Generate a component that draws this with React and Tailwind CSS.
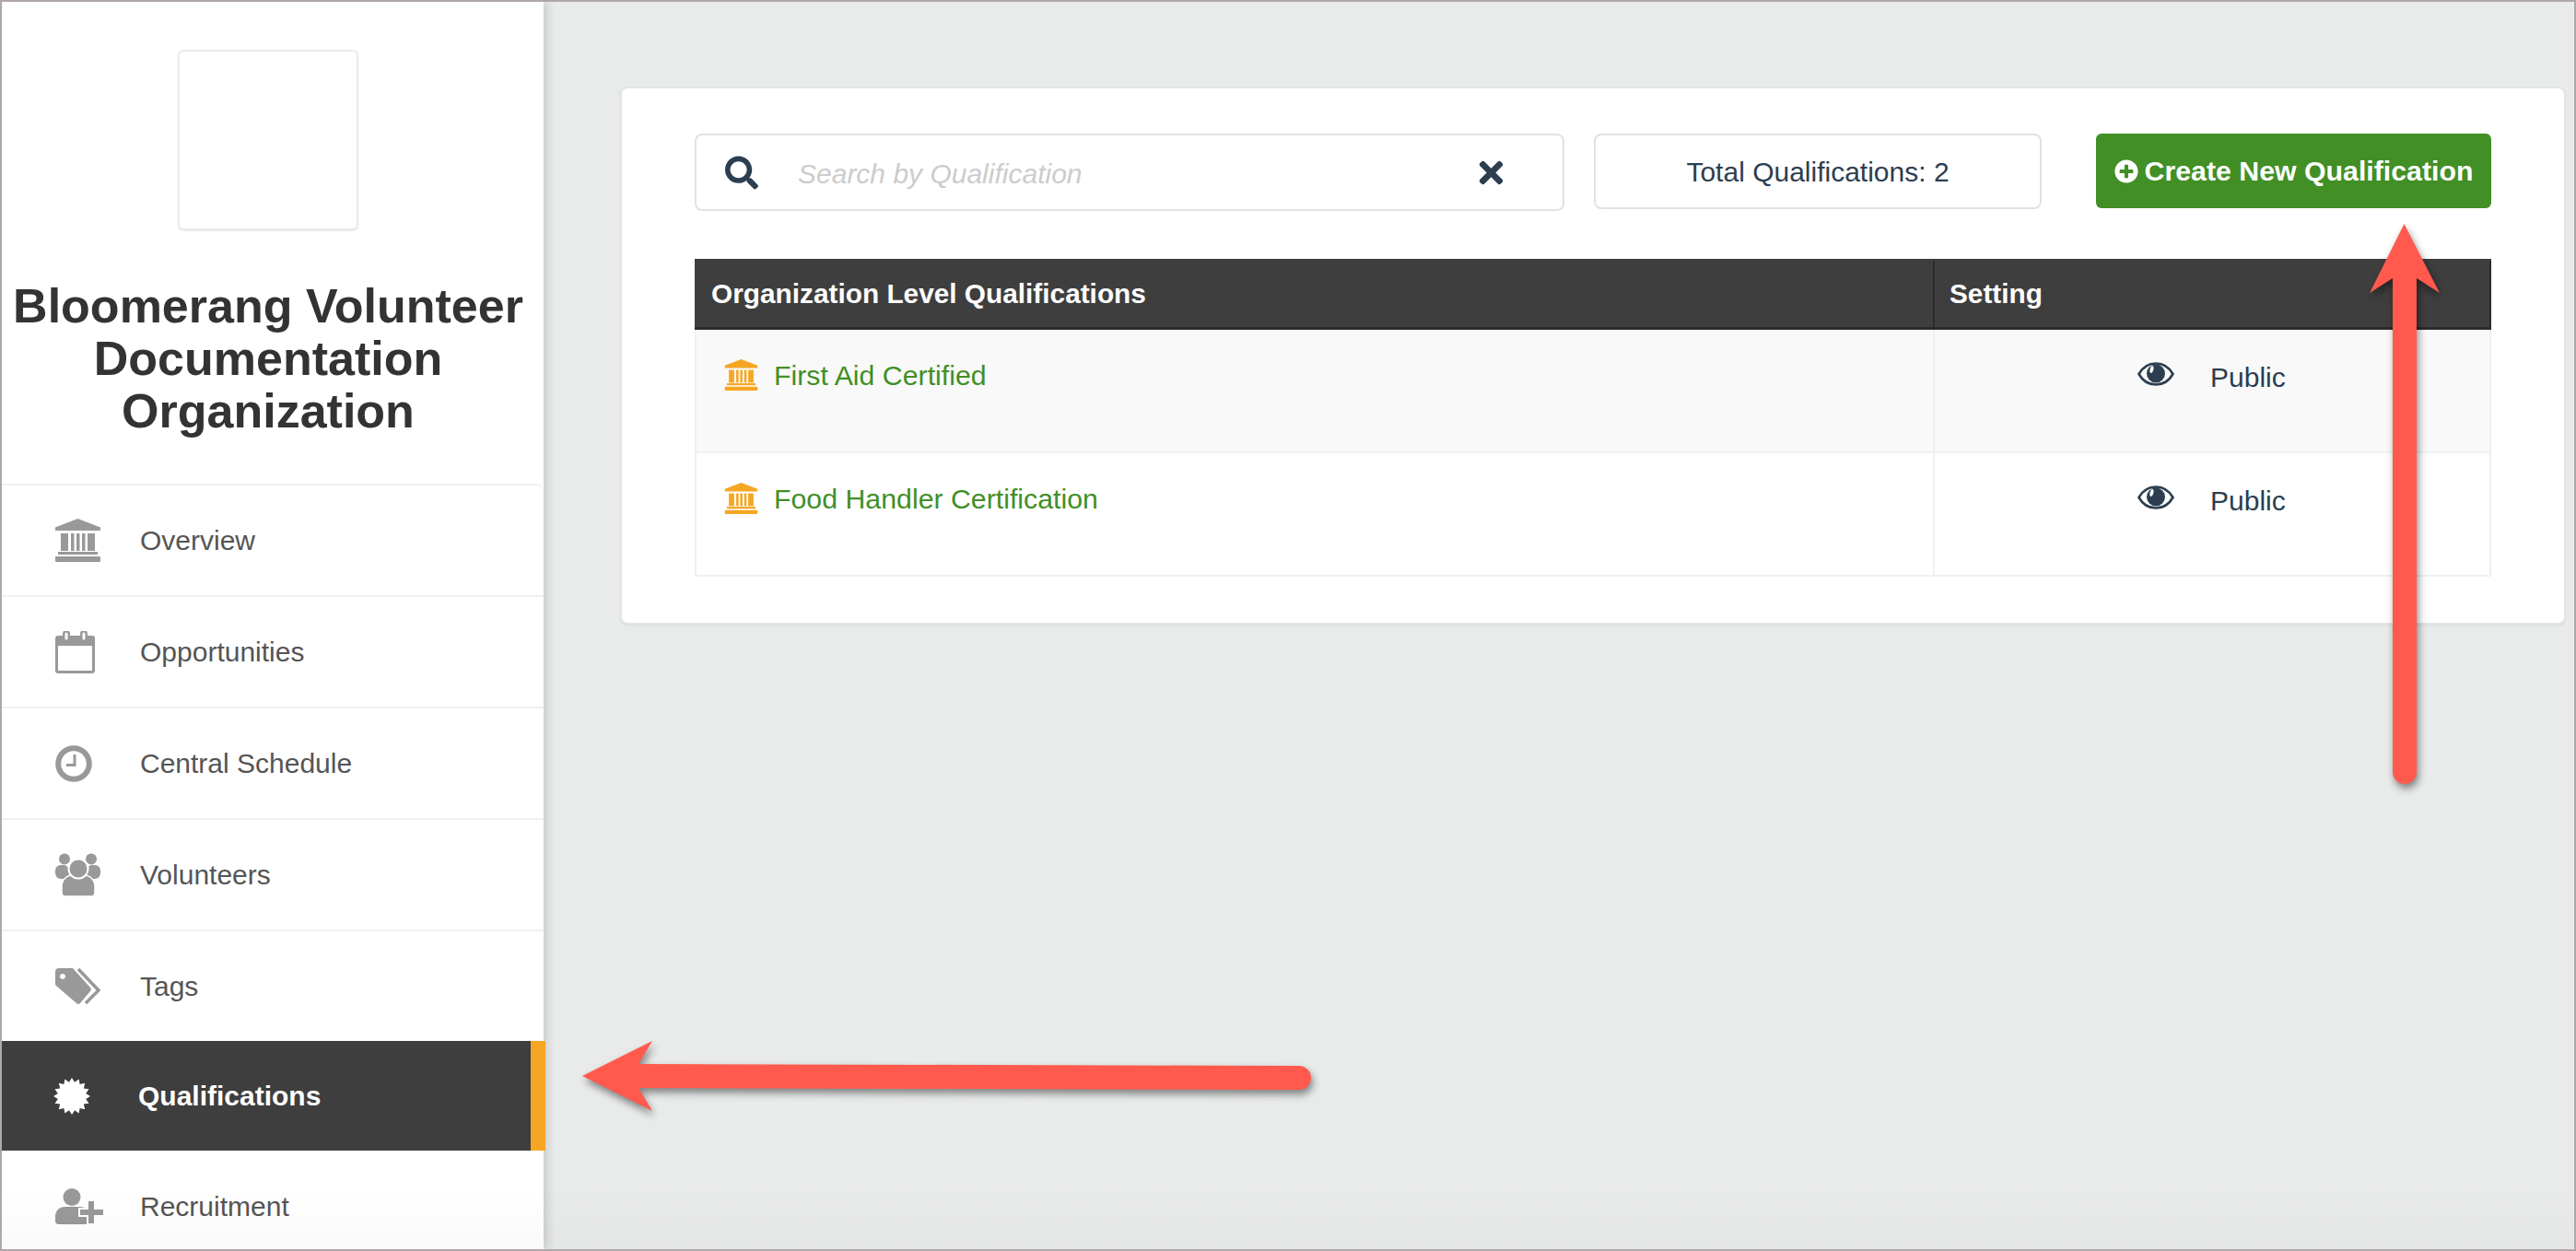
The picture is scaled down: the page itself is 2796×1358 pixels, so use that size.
import { FaSearch, FaTimes, FaPlusCircle } from "react-icons/fa";

const BankIcon = ({ className }) => (
  <svg viewBox="0 0 49 47" className={className} fill="currentColor">
    <path d="M24.5 0 L49 9.5 V13 H0 V9.5 Z" />
    <rect x="6" y="16" width="8" height="19" />
    <rect x="17" y="16" width="3.5" height="19" />
    <rect x="23" y="16" width="3.5" height="19" />
    <rect x="29" y="16" width="3.5" height="19" />
    <rect x="35" y="16" width="8" height="19" />
    <rect x="3" y="36" width="43" height="3" />
    <rect x="0" y="41" width="49" height="6" rx="1" />
  </svg>
);

const CalendarIcon = ({ className }) => (
  <svg viewBox="0 0 43 46" className={className} fill="currentColor">
    <path d="M3 5 H8 V3 a4 4 0 0 1 8 0 V5 H27 V3 a4 4 0 0 1 8 0 V5 H40 a3 3 0 0 1 3 3 V43 a3 3 0 0 1-3 3 H3 a3 3 0 0 1-3-3 V8 a3 3 0 0 1 3-3 Z M3 16 V43 H40 V16 Z" fillRule="evenodd" />
    <rect x="10.5" y="1.5" width="3" height="8" fill="#fff" rx="1.5" />
    <rect x="29.5" y="1.5" width="3" height="8" fill="#fff" rx="1.5" />
  </svg>
);

const ClockIcon = ({ className }) => (
  <svg viewBox="0 0 40 40" className={className} fill="none" stroke="currentColor">
    <circle cx="20" cy="20" r="16.8" strokeWidth="6" />
    <path d="M21 10 V21.5 H12" strokeWidth="3" />
  </svg>
);

const UsersIcon = ({ className }) => (
  <svg viewBox="0 0 49 47" className={className} fill="currentColor">
    <circle cx="10" cy="6.5" r="6" />
    <circle cx="39" cy="6.5" r="6" />
    <rect x="0" y="13" width="15" height="15" rx="6" />
    <rect x="34" y="13" width="15" height="15" rx="6" />
    <path d="M11 47 a4 4 0 0 1-4-4 V36 a12 12 0 0 1 12-12 H31 a12 12 0 0 1 12 12 V43 a4 4 0 0 1-4 4 Z" stroke="#fff" strokeWidth="1.5" />
    <circle cx="25" cy="17" r="10.5" stroke="#fff" strokeWidth="2" />
  </svg>
);

const TagsIcon = ({ className }) => (
  <svg viewBox="0 0 49 40" className={className}>
    <path fill="currentColor" fillRule="evenodd" d="M4 0 H19 L38 21 a3 3 0 0 1 0 4 L27 38 a3 3 0 0 1-4 0 L2 20 a4 4 0 0 1-2-4 V4 a4 4 0 0 1 4-4 Z M8 6 a3 3 0 1 0 0.01 0 Z" />
    <path fill="none" stroke="currentColor" strokeWidth="3.5" d="M25 1 L47 24 L33 38" />
  </svg>
);

const starPoints = Array.from({ length: 32 }, (_, i) => {
  const r = i % 2 === 0 ? 20 : 15.5;
  const a = (i * Math.PI) / 16;
  return `${20 + r * Math.sin(a)},${20 - r * Math.cos(a)}`;
}).join(" ");

const BadgeIcon = ({ className }) => (
  <svg viewBox="0 0 40 40" className={className} fill="currentColor">
    <polygon points={starPoints} />
  </svg>
);

const RecruitIcon = ({ className }) => (
  <svg viewBox="0 0 53 39" className={className} fill="currentColor">
    <circle cx="18" cy="9.5" r="9.5" />
    <path d="M0 29 a10 10 0 0 1 10-9 H28 a10 10 0 0 1 10 9 V35 a4 4 0 0 1-4 4 H4 a4 4 0 0 1-4-4 Z" />
    <path d="M35 13 H43 V22 H53 V30 H43 V39 H35 V30 H26 V22 H35 Z" stroke="#fff" strokeWidth="2" />
  </svg>
);

const EyeIcon = ({ className }) => (
  <svg viewBox="0 0 40 26" className={className}>
    <path d="M1.5 13 C6 5 12 1.5 20 1.5 C28 1.5 34 5 38.5 13 C34 21 28 24.5 20 24.5 C12 24.5 6 21 1.5 13 Z" fill="none" stroke="currentColor" strokeWidth="2.6" />
    <ellipse cx="20" cy="12.5" rx="10" ry="10" fill="currentColor" />
    <ellipse cx="15.5" cy="8" rx="1.8" ry="4" fill="#fff" transform="rotate(15 15.5 8)" />
  </svg>
);

const navItems = [
  { label: "Overview", icon: BankIcon, iconSize: "w-[49px] h-[47px]", height: "h-[121px]" },
  { label: "Opportunities", icon: CalendarIcon, iconSize: "w-[43px] h-[46px]", height: "h-[121px]" },
  { label: "Central Schedule", icon: ClockIcon, iconSize: "w-[40px] h-[40px]", height: "h-[121px]" },
  { label: "Volunteers", icon: UsersIcon, iconSize: "w-[49px] h-[47px]", height: "h-[121px]" },
  { label: "Tags", icon: TagsIcon, iconSize: "w-[49px] h-[40px]", height: "h-[119px]", noBorder: true },
];

const NavRow = ({ item }) => {
  const Icon = item.icon;
  return (
    <div className={`flex items-center pl-[58px] ${item.height} ${item.noBorder ? "" : "border-b-2 border-[#eef1f1]"}`}>
      <div className="w-[92px] shrink-0 text-[#999999]">
        <Icon className={item.iconSize} />
      </div>
      <span className="text-[30px] text-[#555555]">{item.label}</span>
    </div>
  );
};

const qualifications = [
  { name: "First Aid Certified", rowClass: "bg-[#f9f9f9] h-[134px]" },
  { name: "Food Handler Certification", rowClass: "bg-white h-[134px]" },
];

export default function App() {
  return (
    <div className="relative w-[2796px] h-[1358px] overflow-hidden flex border-2 border-[#b0a8a8] bg-[#e9ebea] font-['Liberation_Sans',Arial,sans-serif]">
      {/* Sidebar */}
      <aside className="w-[588px] shrink-0 bg-white shadow-[4px_0_10px_rgba(0,0,0,0.14)] z-10">
        <div className="pr-[10px]">
          <div className="w-[196px] h-[196px] mt-[52px] mx-auto border-2 border-[#e6eaea] rounded-md bg-white shadow-[0_1px_1px_rgba(0,0,0,0.08)]" />
          <h1 className="mt-[54px] text-center text-[52px] leading-[57px] font-bold text-[#333333]">
            Bloomerang Volunteer
            <br />
            Documentation
            <br />
            Organization
          </h1>
        </div>

        <nav className="mt-[50px] border-t-2 border-[#eef1f1] rounded-tr-lg">
          {navItems.map((item) => (
            <NavRow key={item.label} item={item} />
          ))}
          <div className="flex items-center h-[119px] w-[590px] pl-[56px] bg-[#3e3e3e] border-r-16 border-[#f6a623]">
            <div className="w-[92px] shrink-0 text-white">
              <BadgeIcon className="w-[40px] h-[40px]" />
            </div>
            <span className="text-[30px] font-bold text-white">Qualifications</span>
          </div>
          <div className="flex items-center h-[120px] pl-[58px]">
            <div className="w-[92px] shrink-0 text-[#999999]">
              <RecruitIcon className="w-[53px] h-[39px]" />
            </div>
            <span className="text-[30px] text-[#555555]">Recruitment</span>
          </div>
        </nav>
      </aside>

      {/* Main */}
      <main className="flex-1 pt-[92px] pl-[83px] pr-[9px]">
        <div className="h-[584px] border-2 border-[#e3e5e5] rounded-lg bg-white pt-[49px] pl-[79px] pr-[79px] shadow-[0_1px_2px_rgba(0,0,0,0.08)]">
          <div className="flex items-start h-[82px] mb-[54px]">
            <div className="flex items-center w-[944px] h-[84px] pl-[31px] pr-[61px] border-2 border-[#e2e2e2] rounded-lg text-[#2c3e50]">
              <FaSearch className="w-[36px] h-[37px] shrink-0" />
              <span className="ml-[43px] flex-1 pt-[2px] text-[30px] italic text-[#cccccc]">Search by Qualification</span>
              <FaTimes className="w-[33px] h-[37px] shrink-0" />
            </div>
            <div className="flex items-center justify-center w-[486px] h-[82px] ml-[32px] pt-[1px] border-2 border-[#e2e2e2] rounded-lg text-[30px] text-[#2c3e50]">
              Total Qualifications: 2
            </div>
            <button className="flex items-center justify-center gap-[7px] w-[429px] h-[81px] ml-[59px] rounded-md bg-[#428f26] text-[30.3px] font-bold text-white">
              <FaPlusCircle className="w-[26px] h-[26px]" />
              Create New Qualification
            </button>
          </div>

          <div>
            <div className="grid grid-cols-[1344px_1fr] h-[77px] pt-[2px] bg-[#3e3e3e] border-b-[3px] border-[#2a2a2a] text-[29.8px] font-bold text-white">
              <div className="flex items-center pl-[18px]">Organization Level Qualifications</div>
              <div className="flex items-center pl-[16px] border-l-2 border-r-2 border-[#2a2a2a]">Setting</div>
            </div>
            {qualifications.map((q) => (
              <div key={q.name} className={`grid grid-cols-[1342px_1fr] border-x-2 border-b-2 border-[#eef1f1] ${q.rowClass}`}>
                <div className="flex items-start gap-[17px] pl-[30px] pt-[32px] text-[30.3px] leading-[36px] text-[#428f26]">
                  <BankIcon className="w-[37px] h-[34px] shrink-0 text-[#f6a623]" />
                  {q.name}
                </div>
                <div className="flex items-start pl-[220px] pt-[34px] border-l-2 border-[#eef1f1] text-[30px] leading-[36px] text-[#2c3e50]">
                  <EyeIcon className="w-[40px] h-[26px] shrink-0 mt-[1px]" />
                  <span className="ml-[39px]">Public</span>
                </div>
              </div>
            ))}
          </div>
        </div>
      </main>

      {/* Annotation arrows */}
      <svg viewBox="0 0 100 630" className="absolute left-[2558px] top-[233px] z-20 w-[100px] h-[630px] drop-shadow-[2px_5px_4px_rgba(0,0,0,0.45)]">
        <path d="M49.5 8 L88 83 L63 67 V603 a13 13 0 0 1-26 0 V67 L12 83 Z" fill="#ff5a4d" />
      </svg>
      <svg viewBox="0 0 820 100" className="absolute left-[618px] top-[1118px] z-20 w-[820px] h-[100px] drop-shadow-[2px_5px_4px_rgba(0,0,0,0.45)]">
        <path d="M12 48 L88 10 L73 35 L790 37 a13 13 0 0 1 0 26 L73 61 L88 86 Z" fill="#ff5a4d" />
      </svg>

      {/* Faint darkening along the bottom edge of the capture */}
      <div className="absolute left-0 right-0 bottom-0 z-10 h-[70px] pointer-events-none bg-linear-to-t from-black/2 to-transparent" />
    </div>
  );
}
